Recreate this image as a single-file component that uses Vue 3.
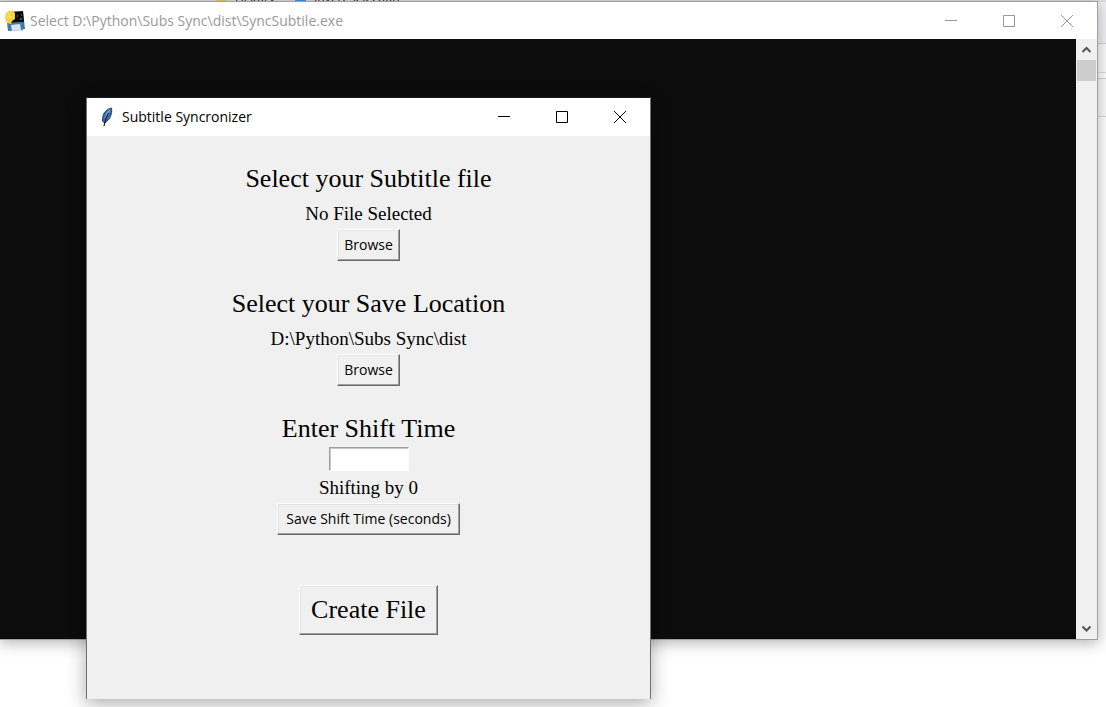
<script setup>
import { ref } from 'vue'

const source = ref('No File Selected')
const target = ref('D:\\Python\\Subs Sync\\dist')
const entry = ref('')
const shift = ref('0')

function saveShift() {
  shift.value = entry.value || '0'
}
</script>

<template>
  <div class="desktop">
    <div class="explorer">
      <div class="ribbon">
        <span class="ribbon-item"><i class="folder"></i>History</span>
        <span class="ribbon-item"><i class="tile"></i>Invert selection</span>
      </div>
      <div class="address"></div>
      <div class="divider"></div>
      <div class="columns"></div>
    </div>

    <section class="window console" aria-label="Console">
      <header class="titlebar inactive">
        <svg class="app-icon" width="20" height="22" viewBox="0 0 20 22">
          <path d="M1 4 18 2l2 17-17 2z" fill="#3b79b0" />
          <path d="M3 2 18 1l1 11-14 1z" fill="#080b0e" />
          <path d="M4 13l13-1 1 8-13 1z" fill="#447fab" />
          <path d="M6 15l9-1 1 6-9 1z" fill="#dce3e8" />
          <path d="M1 3q3-3 7-2l2 2v6l-3 2-1 3-4-1-2-5z" fill="#f8d23a" />
          <path d="M3 4h3M2 7h5" stroke="#fff09b" stroke-width="1" />
          <path d="M12 6h1M16 5h1M15 9h2" stroke="#8d9599" stroke-width="1" />
        </svg>
        <h1 class="title">Select D:\Python\Subs Sync\dist\SyncSubtile.exe</h1>
        <button class="control" aria-label="Minimize console"><svg width="12" height="12" viewBox="0 0 12 12"><path d="M0 5.5h12" /></svg></button>
        <button class="control" aria-label="Maximize console"><svg width="12" height="12" viewBox="0 0 12 12"><path d="M.5.5h11v11H.5z" /></svg></button>
        <button class="control" aria-label="Close console"><svg width="12" height="12" viewBox="0 0 12 12"><path d="M0 0l12 12M12 0 0 12" /></svg></button>
      </header>
      <div class="console-body">
        <div class="screen"></div>
        <div class="scrollbar">
          <button class="arrow" aria-label="Scroll up"><svg width="10" height="8" viewBox="0 0 10 8"><path d="M.5 6l4-4 4 4" /></svg></button>
          <div class="thumb"></div>
          <button class="arrow down" aria-label="Scroll down"><svg width="10" height="8" viewBox="0 0 10 8"><path d="M.5 1.500l4 4 4-4" /></svg></button>
        </div>
      </div>
    </section>

    <section class="window dialog" aria-label="Subtitle Syncronizer">
      <header class="titlebar">
        <svg class="feather" width="12" height="20" viewBox="0 0 12 20">
          <path d="M10.500 1C5 2 1 7 1.500 14l2 2C9 13 11.500 7 10.500 1z" fill="#3c6ca8" stroke="#39434f" stroke-width="1" />
          <path d="M9.500 2C6 4 4 8 3.500 12L7 8z" fill="#7eaee2" />
          <path d="M7.500 6Q5 10 3 19" fill="none" stroke="#15202d" stroke-width="1.200" />
        </svg>
        <h2 class="title">Subtitle Syncronizer</h2>
        <button class="control" aria-label="Minimize"><svg width="12" height="12" viewBox="0 0 12 12"><path d="M0 5.500h12" /></svg></button>
        <button class="control" aria-label="Maximize"><svg width="12" height="12" viewBox="0 0 12 12"><path d="M.5.5h11v11H.5z" /></svg></button>
        <button class="control" aria-label="Close"><svg width="12" height="12" viewBox="0 0 12 12"><path d="M0 0l12 12M12 0 0 12" /></svg></button>
      </header>
      <form class="form" @submit.prevent>
        <div class="group">
          <h3 class="heading">Select your Subtitle file</h3>
          <p class="status">{{ source }}</p>
          <button type="button" class="raised">Browse</button>
        </div>
        <div class="group">
          <h3 class="heading">Select your Save Location</h3>
          <p class="status">{{ target }}</p>
          <button type="button" class="raised">Browse</button>
        </div>
        <div class="group">
          <label class="heading" for="shift">Enter Shift Time</label>
          <input id="shift" v-model="entry" class="entry" type="text" />
          <p class="status">Shifting by {{ shift }}</p>
          <button type="button" class="raised wide" @click="saveShift">Save Shift Time (seconds)</button>
        </div>
        <button type="submit" class="raised create">Create File</button>
      </form>
    </section>
  </div>
</template>

<style>
body {
  margin: 0;
}
</style>

<style scoped>
.desktop {
  position: relative;
  height: 100vh;
  overflow: hidden;
  background: #fff;
  font-family: "Open Sans", "Noto Sans", sans-serif;
}

.desktop * {
  box-sizing: border-box;
}

.explorer {
  display: flex;
  flex-direction: column;
}

.ribbon {
  display: flex;
  align-items: flex-start;
  gap: 20px;
  height: 44px;
  padding-left: 216px;
  overflow: hidden;
  background: #f0f0f2;
  border-bottom: 1px solid #d0d0d2;
  box-shadow: inset 0 2px #dcdcdc;
  color: #222;
  font-size: 12px;
  line-height: 14px;
}

.ribbon-item {
  display: flex;
  gap: 8px;
  margin-top: -9px;
}

.folder {
  width: 11px;
  height: 11px;
  background: #e8c96b;
}

.tile {
  width: 11px;
  height: 11px;
  background: #3f92dc;
}

.address {
  height: 29px;
  background: #fafafa;
  border-bottom: 1px solid #dcdcdc;
}

.divider {
  height: 6px;
  border-bottom: 1px solid #cfcfcf;
}

.columns {
  height: 38px;
  background: #fafafa;
  border-bottom: 1px solid #d8d8d8;
}

.window {
  position: absolute;
  display: flex;
  flex-direction: column;
}

.console {
  inset: 1px 8px 67px 0;
  border: 1px solid #a0a0a0;
  border-left: 0;
  box-shadow: 0 3px 14px rgba(0, 0, 0, 0.3);
}

.dialog {
  top: 97px;
  left: 86px;
  width: 565px;
  border: 1px solid #707070;
  border-top-color: #1c1c1c;
  border-bottom: 0;
  box-shadow: 0 5px 18px rgba(0, 0, 0, 0.32);
}

.titlebar {
  display: flex;
  align-items: center;
  height: 38px;
  flex: none;
  padding-right: 1px;
  background: #fff;
  color: #000;
}

.inactive {
  height: 37px;
  color: #999;
}

.app-icon {
  margin: 0 5px;
}

.feather {
  margin: 0 9px 0 14px;
}

.title {
  flex: 1;
  margin: 0;
  font-size: 14px;
  font-weight: 400;
  line-height: 20px;
  white-space: nowrap;
}

.control {
  display: grid;
  place-items: center;
  width: 58px;
  height: 36px;
  padding: 0;
  border: 0;
  background: none;
  color: inherit;
}

.control svg {
  display: block;
  fill: none;
  stroke: currentColor;
  stroke-width: 1;
}

.console-body {
  display: flex;
  flex: 1;
}

.screen {
  flex: 1;
  background: #0c0c0c;
}

.scrollbar {
  display: flex;
  flex-direction: column;
  width: 21px;
  padding: 0 1px;
  background: #f0f0f0;
}

.arrow {
  display: grid;
  place-items: center;
  height: 21px;
  padding: 0;
  border: 0;
  background: none;
}

.arrow svg {
  fill: none;
  stroke: #555;
  stroke-width: 2;
}

.down {
  margin-top: auto;
}

.thumb {
  height: 21px;
  background: #cdcdcd;
}

.form {
  display: flex;
  flex-direction: column;
  align-items: center;
  gap: 25px;
  padding: 25px 0 64px;
  background: #f0f0f0;
}

.group {
  display: flex;
  flex-direction: column;
  align-items: center;
}

.heading,
.status,
.create {
  font-family: "Liberation Serif", serif;
  font-variant-ligatures: none;
}

.heading {
  margin: 0;
  font-size: 26px;
  font-weight: 400;
  line-height: 36px;
}

.status {
  margin: 0;
  padding-top: 2px;
  font-size: 19px;
  line-height: 30px;
}

.raised {
  height: 32px;
  padding: 0 6px;
  border: 1px solid;
  border-color: #fff #696969 #696969 #fff;
  box-shadow: inset -1px -1px #a0a0a0, inset 1px 1px #e3e3e3;
  background: #f0f0f0;
  color: #000;
  font-family: "Open Sans", "Noto Sans", sans-serif;
  font-size: 14px;
  line-height: 20px;
}

.wide {
  padding: 0 8px;
}

.create {
  height: 50px;
  margin-top: 25px;
  padding: 0 11px;
  font-family: "Liberation Serif", serif;
  font-size: 26px;
  line-height: 36px;
}

.entry {
  width: 80px;
  height: 24px;
  padding: 0 3px;
  border: 1px solid;
  border-color: #a0a0a0 #fff #fff #a0a0a0;
  box-shadow: inset 1px 1px #c8c8c8;
  background: #fff;
  font-size: 14px;
}
</style>
